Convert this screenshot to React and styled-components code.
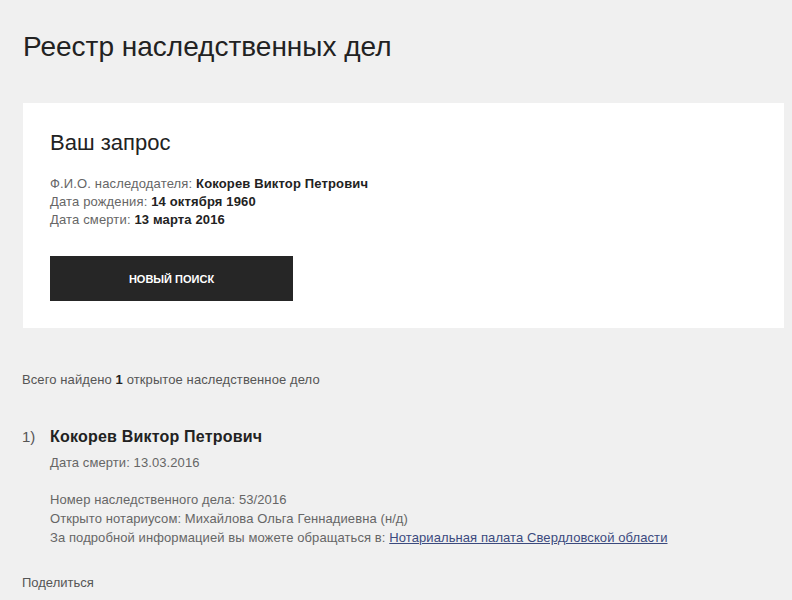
import React from 'react';
import styled, { createGlobalStyle } from 'styled-components';

const Global = createGlobalStyle`
  html, body {
    margin: 0;
    background: #f0f0f0;
  }
  body {
    font-family: "Liberation Sans", Arial, sans-serif;
    color: #222;
  }
`;

const Page = styled.main`
  padding: 31px 8px 0 22px;
`;

const Title = styled.h1`
  margin: 0 0 0 1px;
  font-size: 28px;
  font-weight: 400;
  line-height: 32px;
  color: #222;
`;

const Card = styled.section`
  margin: 40px 0 0 1px;
  background: #fff;
  padding: 27px 27px 27px 27px;
`;

const CardTitle = styled.h2`
  margin: 0 0 19px;
  font-size: 22px;
  font-weight: 400;
  line-height: 26px;
  color: #222;
`;

const Info = styled.div`
  font-size: 13px;
  line-height: 18px;
  letter-spacing: 0.15px;
  color: #666;
  b {
    color: #222;
  }
`;

const Button = styled.button`
  display: block;
  margin-top: 27px;
  width: 243px;
  height: 45px;
  border: 0;
  background: #262626;
  color: #fff;
  font-family: inherit;
  font-size: 11px;
  font-weight: 700;
  text-transform: uppercase;
  cursor: pointer;
`;

const Summary = styled.p`
  margin: 43px 0 0;
  font-size: 13px;
  line-height: 18px;
  letter-spacing: 0.1px;
  color: #555;
  b {
    color: #222;
  }
`;

const Result = styled.div`
  display: grid;
  grid-template-columns: 28px 1fr;
  margin-top: 37px;
`;

const Num = styled.span`
  font-size: 15px;
  line-height: 22px;
  color: #555;
`;

const Name = styled.h3`
  margin: 0;
  font-size: 16px;
  font-weight: 700;
  line-height: 22px;
  letter-spacing: 0.2px;
  color: #222;
`;

const Line = styled.div`
  font-size: 13px;
  line-height: 19px;
  letter-spacing: 0.09px;
  color: #666;
  margin-top: ${p => p.$gap || 0}px;
`;

const Link = styled.a`
  color: #3b4a7e;
  text-decoration: underline;
`;

const Share = styled.div`
  margin-top: 27px;
  font-size: 13px;
  line-height: 18px;
  color: #555;
`;

export default function App() {
  return (
    <>
      <Global />
      <Page>
        <Title>Реестр наследственных дел</Title>
        <Card>
          <CardTitle>Ваш запрос</CardTitle>
          <Info>
            <div>Ф.И.О. наследодателя: <b>Кокорев Виктор Петрович</b></div>
            <div>Дата рождения: <b>14 октября 1960</b></div>
            <div>Дата смерти: <b>13 марта 2016</b></div>
          </Info>
          <Button>Новый поиск</Button>
        </Card>
        <Summary>
          Всего найдено <b>1</b> открытое наследственное дело
        </Summary>
        <Result>
          <Num>1)</Num>
          <div>
            <Name>Кокорев Виктор Петрович</Name>
            <Line $gap={5}>Дата смерти: 13.03.2016</Line>
            <Line $gap={18}>Номер наследственного дела: 53/2016</Line>
            <Line>Открыто нотариусом: Михайлова Ольга Геннадиевна (н/д)</Line>
            <Line>
              За подробной информацией вы можете обращаться в:{' '}
              <Link href="#">Нотариальная палата Свердловской области</Link>
            </Line>
          </div>
        </Result>
        <Share>Поделиться</Share>
      </Page>
    </>
  );
}
